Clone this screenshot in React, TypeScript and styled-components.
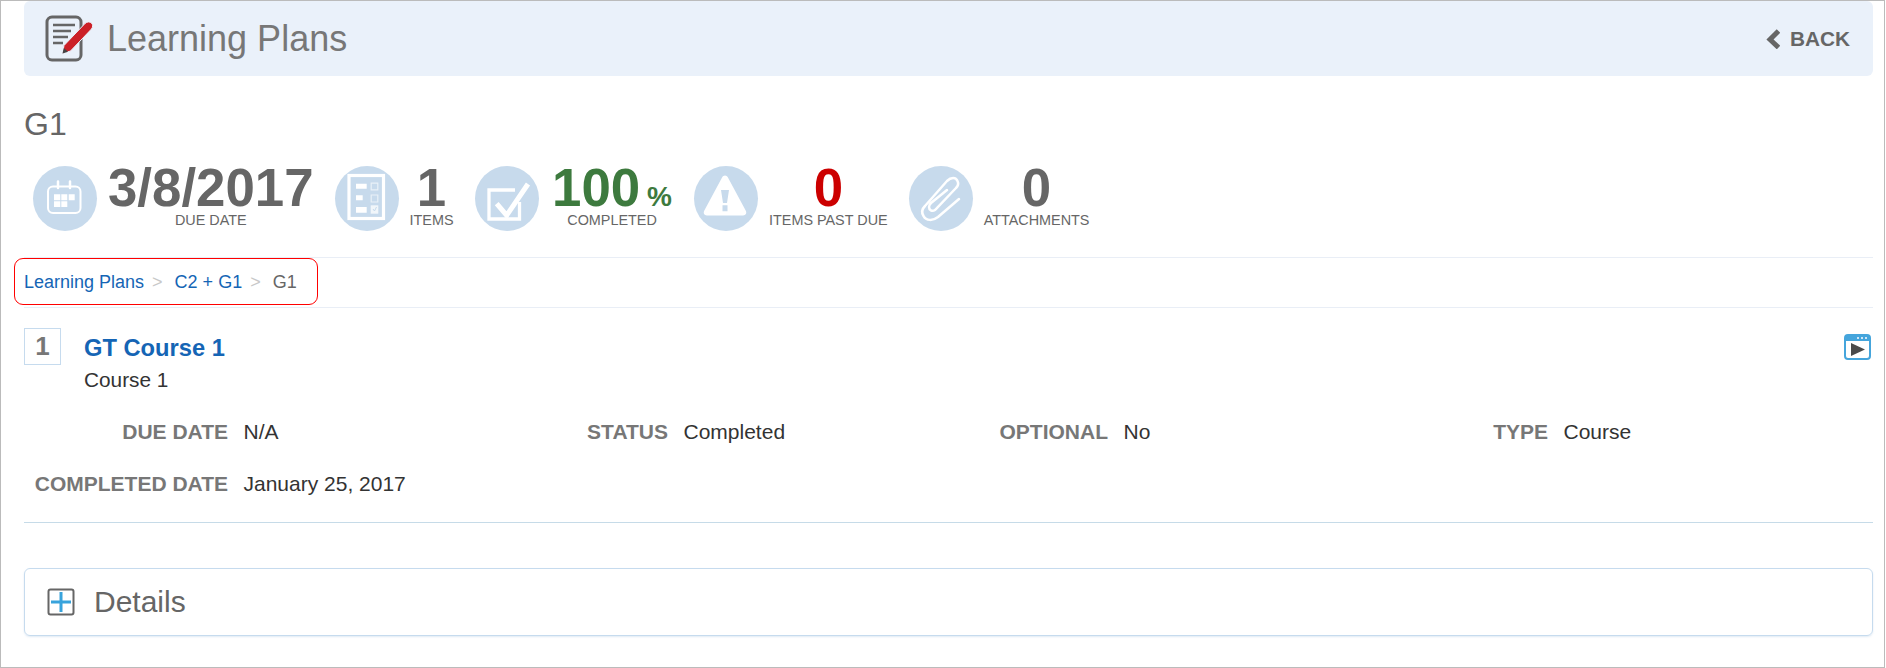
import React from "react";
import styled, { createGlobalStyle } from "styled-components";

const Global = createGlobalStyle`
  html, body { margin: 0; padding: 0; background: #fff; }
  body { font-family: "Liberation Sans", Arial, sans-serif; color: #333; }
  * { box-sizing: border-box; }
`;

const Page = styled.div`
  width: 1885px;
  height: 668px;
  border: 1px solid #bbb;
  padding: 0 11px 0 23px;
  background: #fff;
`;

const HeaderBand = styled.header`
  height: 75px;
  background: #eaf1fa;
  border-radius: 6px;
  display: flex;
  align-items: center;
  justify-content: space-between;
  padding: 0 23px 0 20px;
`;

const TitleGroup = styled.div`
  display: flex;
  align-items: center;
  gap: 13px;
`;

const Title = styled.h1`
  margin: 0;
  font-size: 36px;
  font-weight: 400;
  color: #777;
  line-height: 40px;
`;

const BackLink = styled.a`
  display: flex;
  align-items: center;
  gap: 10px;
  font-size: 20.8px;
  font-weight: 700;
  color: #666;
`;

const PlanName = styled.h2`
  margin: 28px 0 0;
  font-size: 32px;
  font-weight: 400;
  line-height: 40px;
  color: #666;
`;

const StatsRow = styled.section`
  display: flex;
  gap: 21px;
  margin: 22px 0 0 9px;
  height: 91px;
`;

const Stat = styled.div`
  display: flex;
  gap: 11px;
  height: 65px;
`;

const StatCircle = styled.div`
  width: 64px;
  height: 65px;
  flex: none;
  border-radius: 50%;
  background: #c7daec;
`;

const StatText = styled.div<{ $hasUnit: boolean }>`
  display: flex;
  flex-direction: column;
  align-items: center;
  padding: ${(p) => (p.$hasUnit ? "0 1px 0 2.5px" : "0")};
`;

const StatValue = styled.div<{ $color?: string }>`
  font-size: 52.8px;
  font-weight: 700;
  line-height: 43px;
  color: ${(p) => p.$color ?? "#666"};
  white-space: nowrap;
`;

const Percent = styled.span`
  font-size: 28px;
  line-height: 0;
  margin-left: 7px;
`;

const StatLabel = styled.div`
  font-size: 14.4px;
  line-height: 17px;
  margin-top: 3px;
  color: #666;
  white-space: nowrap;
`;

const Breadcrumb = styled.nav`
  position: relative;
  height: 51px;
  display: flex;
  align-items: center;
  border-top: 1px solid #e9eef6;
  border-bottom: 1px solid #e9eef6;
  font-size: 18px;
`;

const Crumb = styled.a`
  color: #1565b5;
`;

const CrumbCurrent = styled.span`
  color: #666;
`;

const CrumbSep = styled.span`
  color: #c8c8c8;
  margin: 0 12px 0 8px;
`;

const Highlight = styled.div`
  position: absolute;
  left: -10px;
  top: 0;
  width: 304px;
  height: 47px;
  border: 1px solid #f00;
  border-radius: 9px;
`;

const Item = styled.article`
  padding: 20px 0 0;
  height: 215px;
  border-bottom: 1px solid #c6dbe8;
`;

const ItemHead = styled.div`
  display: flex;
  align-items: flex-start;
  justify-content: space-between;
`;

const ItemTitleGroup = styled.div`
  display: flex;
  gap: 23px;
`;

const NumberBox = styled.div`
  width: 37px;
  height: 37px;
  border: 1px solid #c6dbee;
  display: flex;
  align-items: center;
  justify-content: center;
  font-size: 26px;
  font-weight: 700;
  color: #777;
`;

const ItemTitles = styled.div`
  display: flex;
  flex-direction: column;
`;

const ItemName = styled.a`
  font-size: 23.7px;
  font-weight: 700;
  line-height: 30px;
  margin-top: 5px;
  color: #1565b5;
`;

const ItemKind = styled.div`
  font-size: 20.8px;
  line-height: 24px;
  margin-top: 5px;
  color: #333;
`;

const PlayIcon = styled.svg`
  margin: 6px 2px 0 0;
`;

const Fields = styled.dl`
  display: grid;
  grid-template-columns: repeat(4, 204px 236px);
  column-gap: 0;
  row-gap: 28px;
  margin: 28px 0 0;
`;

const FieldLabel = styled.dt`
  font-size: 21px;
  font-weight: 700;
  line-height: 24px;
  text-align: right;
  color: #777;
  white-space: nowrap;
`;

const FieldValue = styled.dd`
  margin: 0;
  padding-left: 15.5px;
  font-size: 21px;
  line-height: 24px;
  color: #333;
  white-space: nowrap;
`;

const DetailsCard = styled.section`
  margin-top: 45px;
  height: 68px;
  border: 1px solid #c6dbee;
  border-radius: 6px;
  box-shadow: 0 1px 2px rgba(100, 150, 200, 0.2);
  display: flex;
  align-items: center;
  gap: 19px;
  padding-left: 22px;
`;

const DetailsTitle = styled.h3`
  margin: 0;
  font-size: 30px;
  font-weight: 400;
  color: #666;
`;

const LearningIcon = () => (
  <svg width="50" height="48" viewBox="0 0 50 48">
    <rect x="3" y="2" width="34" height="43" rx="5" fill="none" stroke="#666" strokeWidth="3" />
    <path d="M9 10h22M9 16h18M9 22h15M9 28h10" stroke="#666" strokeWidth="2.6" fill="none" />
    <path
      d="M18.500 38.500L20 30.500L41 8.500C43 6.500 46 6.500 47.500 8S49 12 47.500 14L26.500 36Z"
      fill="#cb2027"
      stroke="#eaf1fa"
      strokeWidth="1"
    />
    <path d="M18.500 38.500l1.300-5.500 4.200 3.800z" fill="#444" />
  </svg>
);

const BackChevron = () => (
  <svg width="15" height="20" viewBox="0 0 15 20">
    <path d="M13.500 2L5 10.500l8.500 8" fill="none" stroke="#666" strokeWidth="5" />
  </svg>
);

const CalendarIcon = () => (
  <svg width="64" height="65" viewBox="0 0 64 65">
    <rect x="15" y="20.500" width="32.500" height="26.500" rx="5" fill="none" stroke="#fff" strokeWidth="2" />
    <path d="M25 15.500v6.500M37 15.500v6.500" stroke="#fff" strokeWidth="2.500" strokeLinecap="round" />
    <path d="M21 28.300h6.300v6H21zM28.300 28.300h6v6h-6zM35.700 28.300h6v6h-6zM21 35.300h6.300V41H21zM28.300 35.300h6V41h-6z" fill="#fff" />
  </svg>
);

const ItemsIcon = () => (
  <svg width="64" height="65" viewBox="0 0 64 65">
    <rect x="14" y="9.500" width="34.500" height="43" fill="none" stroke="#fff" strokeWidth="3.200" />
    <path d="M21 17.700h10.700v5H21zM21 29.300h6.700v5H21zM21 41h10.700v5.700H21z" fill="#fff" />
    <path d="M36.200 17.200h6.600v6.600h-6.600zM36.200 29h6.600v7h-6.600z" fill="none" stroke="#fff" strokeOpacity=".6" strokeWidth="1.200" />
    <path d="M35.700 39.300h7.600v8.400h-7.600z" fill="#fff" fillOpacity=".75" />
    <path d="M38 43l1.500 2 2-4" fill="none" stroke="#c7daec" strokeWidth="1" />
  </svg>
);

const CheckIcon = () => (
  <svg width="64" height="65" viewBox="0 0 64 65">
    <path d="M44.500 36v17H14V24h26" fill="none" stroke="#fff" strokeWidth="3.300" />
    <path d="M21.700 37.700l10 11.600L53 18" fill="none" stroke="#fff" strokeWidth="5" />
  </svg>
);

const WarningIcon = () => (
  <svg width="64" height="65" viewBox="0 0 64 65">
    <path d="M31 9.500c1.200 0 2.200.700 2.800 1.800l18 33.500c1.200 2.400 0 4.700-2.700 4.700H12.900c-2.700 0-3.900-2.300-2.700-4.700l18-33.500c.600-1.100 1.600-1.800 2.800-1.800z" fill="#fff" />
    <path d="M27 24h8l-2 13h-4zM28.500 39.300h5v6h-5z" fill="#c7daec" />
  </svg>
);

const ClipIcon = () => (
  <svg width="64" height="65" viewBox="0 0 64 65">
    <path
      d="M50 33L29 51C24 55 17 55 14.500 50C12 46 13 43 16 40L38 15C42 11 47 11 48.500 15C50 18 49 20 47 22L26 44C23 46 20 44 20 41C20 39 21 38 22 37L38 24"
      fill="none"
      stroke="#fff"
      strokeWidth="2.500"
      strokeLinecap="round"
    />
  </svg>
);

const PlayWindow = () => (
  <PlayIcon width="27" height="26" viewBox="0 0 27 26">
    <rect x="1" y="1" width="25" height="24" rx="3" fill="#fff" stroke="#45a5dc" strokeWidth="2" />
    <path d="M1 4a3 3 0 0 1 3-3h19a3 3 0 0 1 3 3v3H1z" fill="#45a5dc" />
    <path d="M13 3h2v2h-2zM17 3h2v2h-2zM21 3h2v2h-2z" fill="#cfe6f6" />
    <path d="M7 9l14 6.500L7 22z" fill="#4a4a4a" />
  </PlayIcon>
);

const PlusBoxIcon = () => (
  <svg width="28" height="28" viewBox="0 0 28 28">
    <rect x="1.500" y="1.500" width="25" height="25" rx="2" fill="#fff" stroke="#666" strokeWidth="2" />
    <path d="M14 4v20M4 14h20" stroke="#38a3dc" strokeWidth="3" />
  </svg>
);

const stats = [
  { icon: <CalendarIcon />, value: "3/8/2017", label: "DUE DATE" },
  { icon: <ItemsIcon />, value: "1", label: "ITEMS" },
  { icon: <CheckIcon />, value: "100", unit: "%", label: "COMPLETED", color: "#3d7a3e" },
  { icon: <WarningIcon />, value: "0", label: "ITEMS PAST DUE", color: "#cc0000" },
  { icon: <ClipIcon />, value: "0", label: "ATTACHMENTS" },
];

const fields = [
  ["DUE DATE", "N/A"],
  ["STATUS", "Completed"],
  ["OPTIONAL", "No"],
  ["TYPE", "Course"],
  ["COMPLETED DATE", "January 25, 2017"],
];

export default function App() {
  return (
    <Page>
      <Global />
      <HeaderBand>
        <TitleGroup>
          <LearningIcon />
          <Title>Learning Plans</Title>
        </TitleGroup>
        <BackLink>
          <BackChevron />
          BACK
        </BackLink>
      </HeaderBand>
      <PlanName>G1</PlanName>
      <StatsRow>
        {stats.map((s) => (
          <Stat key={s.label}>
            <StatCircle>{s.icon}</StatCircle>
            <StatText $hasUnit={Boolean(s.unit)}>
              <StatValue $color={s.color}>
                {s.value}
                {s.unit && <Percent>{s.unit}</Percent>}
              </StatValue>
              <StatLabel>{s.label}</StatLabel>
            </StatText>
          </Stat>
        ))}
      </StatsRow>
      <Breadcrumb>
        <Highlight />
        <Crumb>Learning Plans</Crumb>
        <CrumbSep>&gt;</CrumbSep>
        <Crumb>C2 + G1</Crumb>
        <CrumbSep>&gt;</CrumbSep>
        <CrumbCurrent>G1</CrumbCurrent>
      </Breadcrumb>
      <Item>
        <ItemHead>
          <ItemTitleGroup>
            <NumberBox>1</NumberBox>
            <ItemTitles>
              <ItemName>GT Course 1</ItemName>
              <ItemKind>Course 1</ItemKind>
            </ItemTitles>
          </ItemTitleGroup>
          <PlayWindow />
        </ItemHead>
        <Fields>
          {fields.map(([k, v]) => (
            <React.Fragment key={k}>
              <FieldLabel>{k}</FieldLabel>
              <FieldValue>{v}</FieldValue>
            </React.Fragment>
          ))}
        </Fields>
      </Item>
      <DetailsCard>
        <PlusBoxIcon />
        <DetailsTitle>Details</DetailsTitle>
      </DetailsCard>
    </Page>
  );
}
